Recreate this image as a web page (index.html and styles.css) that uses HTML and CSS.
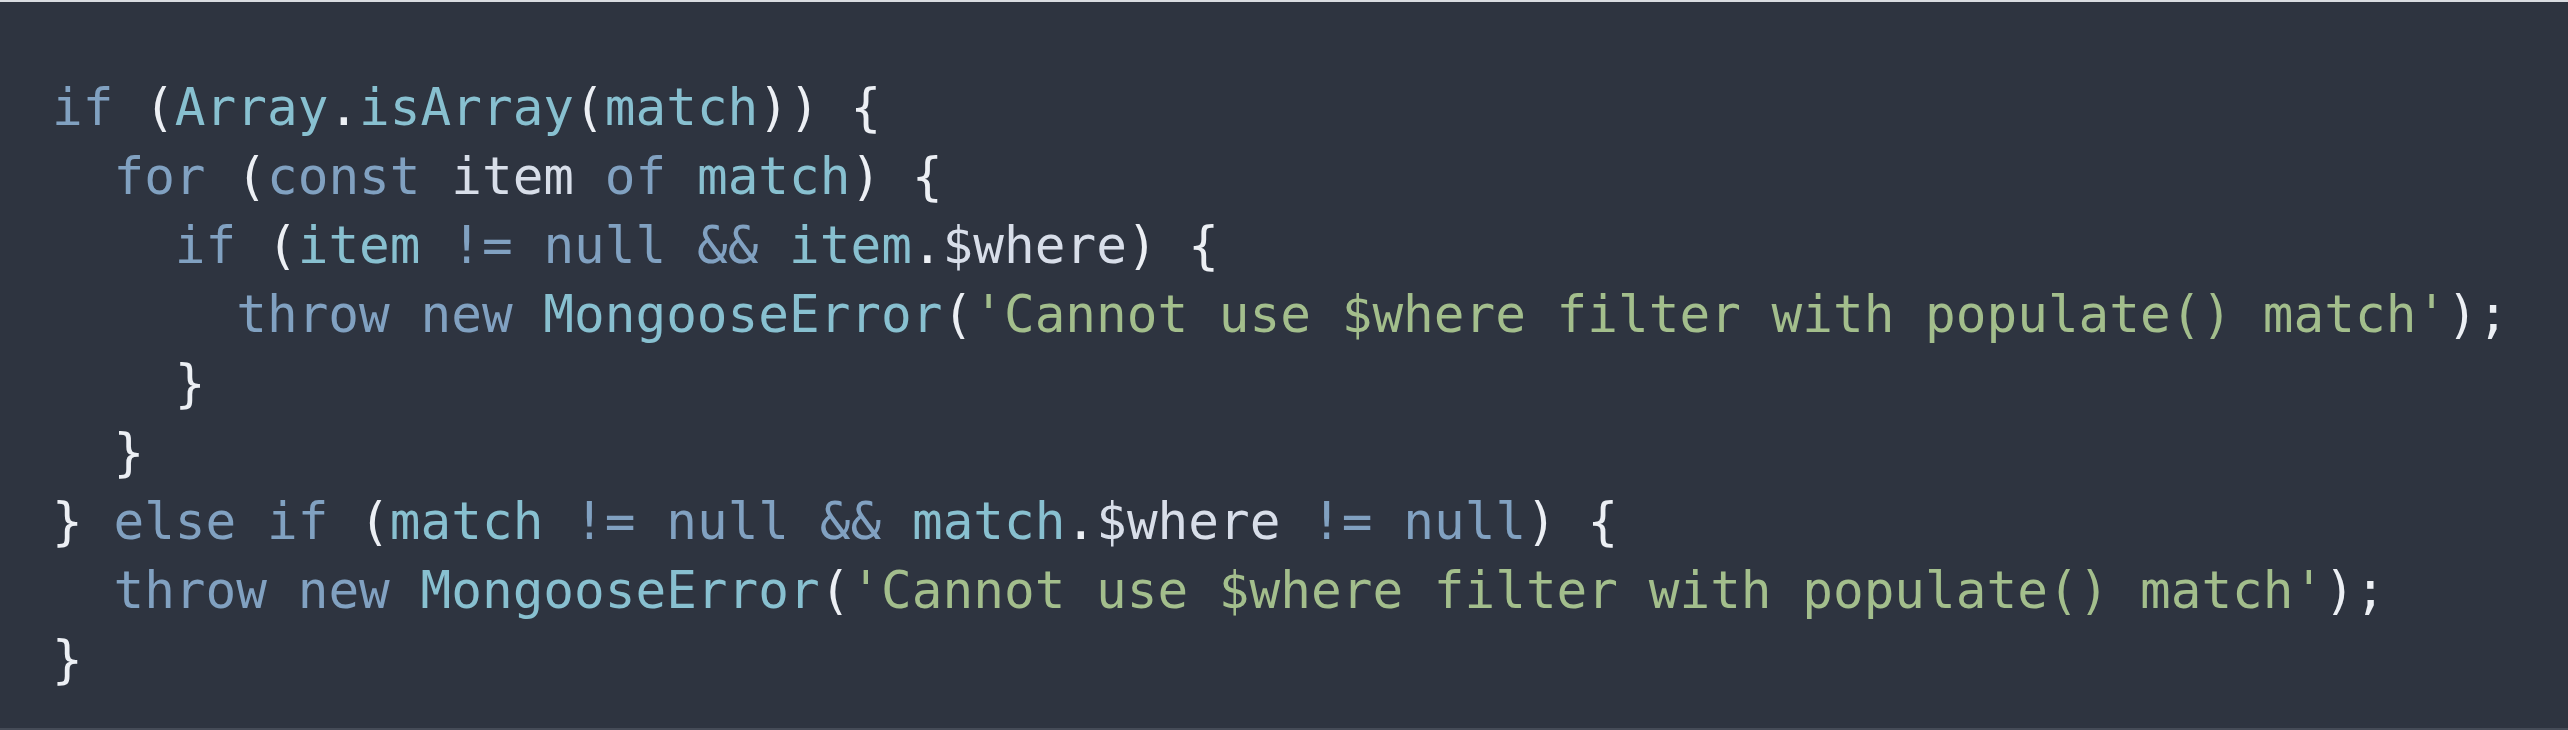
FILE: index.html
```html
<!DOCTYPE html>
<html>
<head>
<meta charset="utf-8">
<link rel="stylesheet" href="styles.css">
</head>
<body>
<div class="frame">
<pre class="code"><code><span class="kw">if</span> <span class="p">(</span><span class="fn">Array</span><span class="p">.</span><span class="fn">isArray</span><span class="p">(</span><span class="fn">match</span><span class="p">))</span> <span class="p">{</span>
  <span class="kw">for</span> <span class="p">(</span><span class="kw">const</span> <span class="id">item</span> <span class="kw">of</span> <span class="fn">match</span><span class="p">)</span> <span class="p">{</span>
    <span class="kw">if</span> <span class="p">(</span><span class="fn">item</span> <span class="kw">!=</span> <span class="kw">null</span> <span class="kw">&amp;&amp;</span> <span class="fn">item</span><span class="p">.</span><span class="id">$where</span><span class="p">)</span> <span class="p">{</span>
      <span class="kw">throw</span> <span class="kw">new</span> <span class="fn">MongooseError</span><span class="p">(</span><span class="str">'Cannot use $where filter with populate() match'</span><span class="p">);</span>
    <span class="p">}</span>
  <span class="p">}</span>
<span class="p">}</span> <span class="kw">else</span> <span class="kw">if</span> <span class="p">(</span><span class="fn">match</span> <span class="kw">!=</span> <span class="kw">null</span> <span class="kw">&amp;&amp;</span> <span class="fn">match</span><span class="p">.</span><span class="id">$where</span> <span class="kw">!=</span> <span class="kw">null</span><span class="p">)</span> <span class="p">{</span>
  <span class="kw">throw</span> <span class="kw">new</span> <span class="fn">MongooseError</span><span class="p">(</span><span class="str">'Cannot use $where filter with populate() match'</span><span class="p">);</span>
<span class="p">}</span></code></pre>
</div>
</body>
</html>
```
FILE: styles.css
```css
html, body {
  margin: 0;
  padding: 0;
  background: #2e3440;
}

.frame {
  width: 2568px;
  height: 730px;
  box-sizing: border-box;
  background: #2e3440;
  border-top: 2px solid #d9dce1;
  border-bottom: 2px solid #454b57;
  padding: 71px 0 0 52px;
}

.code {
  margin: 0;
  font-family: "DejaVu Sans Mono", monospace;
  font-size: 51px;
  line-height: 69px;
  color: #d8dee9;
  white-space: pre;
}

.kw { color: #81a1c1; }
.fn { color: #88c0d0; }
.id { color: #d8dee9; }
.p { color: #eceff4; }
.str { color: #a3be8c; }
```
